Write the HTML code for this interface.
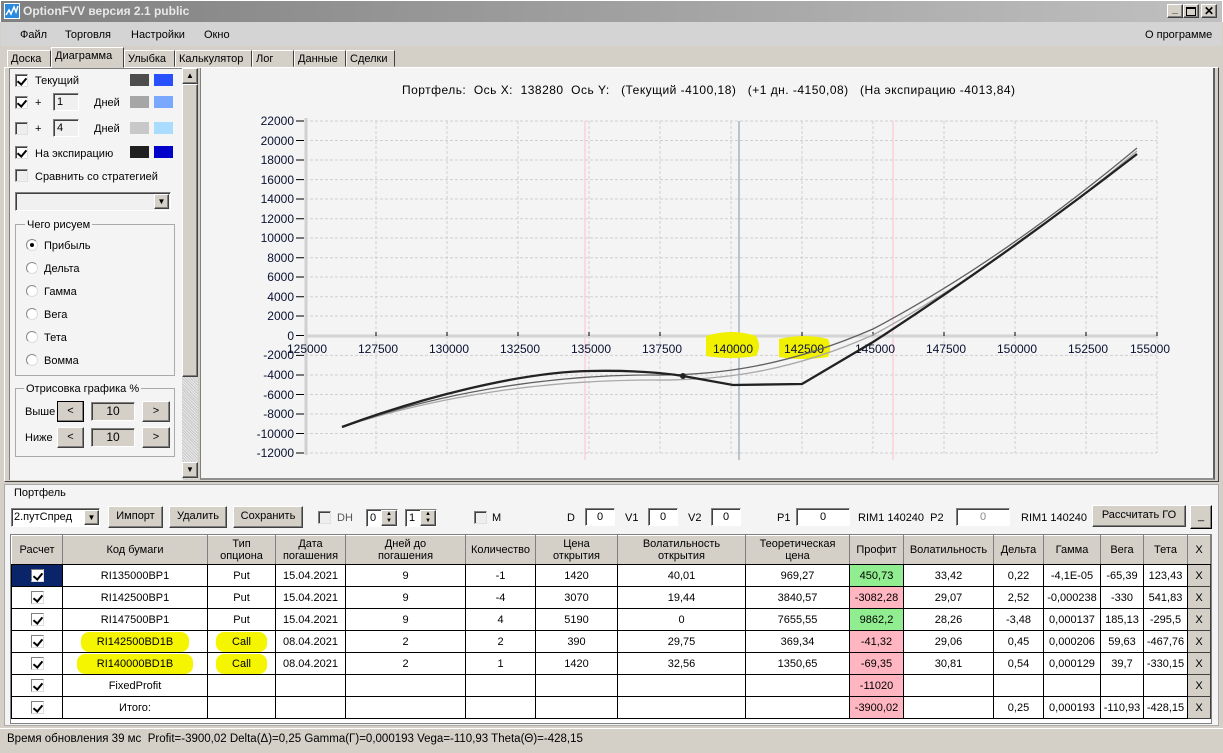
<!DOCTYPE html>
<html><head><meta charset="utf-8"><style>
*{box-sizing:border-box;margin:0;padding:0}
body{width:1223px;height:753px;overflow:hidden;background:#d4d0c8;font-family:"Liberation Sans",sans-serif;font-size:11px;color:#000;position:relative}
.a{position:absolute}
.cb{position:absolute;width:13px;height:13px;background:#fff;border:1px solid #808080;border-right-color:#e0e0e0;border-bottom-color:#e0e0e0;box-shadow:inset 1px 1px 0 #404040}
.cb.k::after{content:"";position:absolute;left:3px;top:1px;width:4px;height:7px;border:solid #000;border-width:0 2px 2px 0;transform:rotate(40deg)}
.cb.d{background:#eee}
.sw{position:absolute;width:19px;height:12px}
.rad{position:absolute;width:12px;height:12px;border-radius:50%;background:#fff;border:1px solid #888;border-right-color:#ddd;border-bottom-color:#ddd}
.rad.on::after{content:"";position:absolute;left:3px;top:3px;width:4px;height:4px;border-radius:50%;background:#000}
.btn{position:absolute;background:#d4d0c8;border:1px solid;border-color:#fff #404040 #404040 #fff;box-shadow:inset -1px -1px 0 #808080;text-align:center;font-size:11px}
.box{position:absolute;background:#fff;border:1px solid;border-color:#808080 #fff #fff #808080;box-shadow:inset 1px 1px 0 #404040;text-align:center;font-size:11px}
.tab{position:absolute;top:50px;height:17px;border:1px solid;border-color:#fff #404040 transparent #fff;padding:2px 3px;font-size:11px;background:#d4d0c8}
table{border-collapse:collapse;table-layout:fixed;font-size:11px}
td{border:1px solid #000;text-align:center;height:22px;padding:0;white-space:nowrap;overflow:hidden}
th{border:1px solid #000;font-weight:normal;background:#d4d0c8;height:29px;line-height:12px;font-size:11px;border-left-color:#fff;border-top-color:#fff;border-right-color:#808080;border-bottom:1px solid #000}
.g{background:#90ee90}.p{background:#ffb6c1}
.x{background:#d4d0c8;border-color:#fff #404040 #404040 #fff}
.hl{background:#f5f500;border-radius:8px;padding:4px 10px}
.ckc{display:inline-block;width:13px;height:13px;vertical-align:middle;position:relative;background:#fff;border:1px solid #808080;border-right-color:#ddd;border-bottom-color:#ddd}
.ckc::after{content:"";position:absolute;left:3px;top:1px;width:4px;height:7px;border:solid #000;border-width:0 2px 2px 0;transform:rotate(40deg)}
</style></head><body>
<div class="a" style="left:0;top:0;width:1223px;height:22px;background:linear-gradient(90deg,#808080,#c0c0c0);border:1px solid #fff;border-bottom:none"></div>
<div class="a" style="left:4px;top:3px;width:16px;height:16px;background:#2a8ae0;border:1px solid #fff"><svg width="14" height="14"><path d="M1 11 L4 6 L6 10 L9 3 L11 8 L13 2" stroke="#fff" stroke-width="1.5" fill="none"/></svg></div>
<div class="a" style="left:23px;top:4px;color:#e8e8e8;font-weight:bold;font-size:12px">OptionFVV версия 2.1 public</div>
<div class="btn" style="left:1167px;top:4px;width:16px;height:14px;font-size:10px;line-height:10px;font-weight:bold">_</div>
<div class="btn" style="left:1183px;top:4px;width:16px;height:14px"><div style="margin:2px auto;width:10px;height:9px;border:1px solid #000;border-top-width:2px"></div></div>
<div class="btn" style="left:1201px;top:4px;width:16px;height:14px;font-size:12px;line-height:12px;font-weight:bold">✕</div>
<div class="a" style="left:1px;top:22px;width:1221px;height:24px;background:#d4d4d4"></div>
<div class="a" style="left:20px;top:29px">Файл</div>
<div class="a" style="left:65px;top:29px">Торговля</div>
<div class="a" style="left:131px;top:29px">Настройки</div>
<div class="a" style="left:204px;top:29px">Окно</div>
<div class="a" style="left:1145px;top:29px">О программе</div>
<div class="tab" style="left:7px;width:44px">Доска</div>
<div class="tab" style="left:51px;top:47px;height:21px;width:73px;z-index:2">Диаграмма</div>
<div class="tab" style="left:124px;width:51px">Улыбка</div>
<div class="tab" style="left:175px;width:77px">Калькулятор</div>
<div class="tab" style="left:252px;width:42px">Лог</div>
<div class="tab" style="left:294px;width:52px">Данные</div>
<div class="tab" style="left:346px;width:49px">Сделки</div>
<div class="a" style="left:4px;top:67px;width:1215px;height:415px;border:1px solid;border-color:#fff #404040 #404040 #fff"></div>
<div class="a" style="left:9px;top:68px;width:174px;height:412px;background:#f4f4f4;border-left:1px solid #808080;border-top:1px solid #808080"></div>
<div class="cb k" style="left:15px;top:74px"></div><div class="a" style="left:35px;top:75px">Текущий</div>
<div class="sw" style="left:130px;top:74px;background:#4d4d4d"></div><div class="sw" style="left:154px;top:74px;background:#2850ff"></div>
<div class="cb k" style="left:15px;top:96px"></div><div class="a" style="left:35px;top:97px">+</div>
<div class="box" style="left:53px;top:93px;width:26px;height:18px;text-align:left;padding-left:3px;line-height:16px;background:#f0f0f0">1</div>
<div class="a" style="left:94px;top:97px">Дней</div>
<div class="sw" style="left:130px;top:96px;background:#a6a6a6"></div><div class="sw" style="left:154px;top:96px;background:#7aa8ff"></div>
<div class="cb d" style="left:15px;top:122px"></div><div class="a" style="left:35px;top:123px">+</div>
<div class="box" style="left:53px;top:119px;width:26px;height:18px;text-align:left;padding-left:3px;line-height:16px;background:#f0f0f0">4</div>
<div class="a" style="left:94px;top:123px">Дней</div>
<div class="sw" style="left:130px;top:122px;background:#c8c8c8"></div><div class="sw" style="left:154px;top:122px;background:#aadcff"></div>
<div class="cb k" style="left:15px;top:146px"></div><div class="a" style="left:35px;top:148px">На экспирацию</div>
<div class="sw" style="left:130px;top:146px;background:#202020"></div><div class="sw" style="left:154px;top:146px;background:#0000c8"></div>
<div class="cb d" style="left:15px;top:169px"></div><div class="a" style="left:35px;top:171px">Сравнить со стратегией</div>
<div class="box" style="left:15px;top:192px;width:156px;height:19px;background:#f0f0f0"></div>
<div class="btn" style="left:154px;top:194px;width:15px;height:15px;font-size:8px;line-height:13px">▼</div>
<div class="a" style="left:15px;top:224px;width:160px;height:152px;border:1px solid #aaa"></div>
<div class="a" style="left:25px;top:219px;background:#f4f4f4;padding:0 2px">Чего рисуем</div>
<div class="rad on" style="left:26px;top:239px"></div><div class="a" style="left:44px;top:240px">Прибыль</div>
<div class="rad" style="left:26px;top:262px"></div><div class="a" style="left:44px;top:263px">Дельта</div>
<div class="rad" style="left:26px;top:285px"></div><div class="a" style="left:44px;top:286px">Гамма</div>
<div class="rad" style="left:26px;top:308px"></div><div class="a" style="left:44px;top:309px">Вега</div>
<div class="rad" style="left:26px;top:331px"></div><div class="a" style="left:44px;top:332px">Тета</div>
<div class="rad" style="left:26px;top:354px"></div><div class="a" style="left:44px;top:355px">Вомма</div>
<div class="a" style="left:15px;top:388px;width:160px;height:69px;border:1px solid #aaa"></div>
<div class="a" style="left:24px;top:383px;background:#f4f4f4;padding:0 2px">Отрисовка графика %</div>
<div class="a" style="left:25px;top:406px">Выше</div>
<div class="btn" style="left:57px;top:401px;width:27px;height:21px;line-height:18px;border-color:#000">&lt;</div>
<div class="box" style="left:91px;top:402px;width:44px;height:19px;line-height:17px;background:#d4d0c8;font-size:12px">10</div>
<div class="btn" style="left:142px;top:401px;width:28px;height:21px;line-height:18px">&gt;</div>
<div class="a" style="left:25px;top:432px">Ниже</div>
<div class="btn" style="left:57px;top:427px;width:27px;height:21px;line-height:18px">&lt;</div>
<div class="box" style="left:91px;top:428px;width:44px;height:19px;line-height:17px;background:#d4d0c8;font-size:12px">10</div>
<div class="btn" style="left:142px;top:427px;width:28px;height:21px;line-height:18px">&gt;</div>
<div class="a" style="left:182px;top:68px;width:16px;height:411px;background:repeating-linear-gradient(45deg,#e8e8e8 0 1px,#c8c8c8 1px 2px)"></div>
<div class="btn" style="left:182px;top:68px;width:16px;height:16px;font-size:8px;line-height:13px">▲</div>
<div class="btn" style="left:182px;top:84px;width:16px;height:293px"></div>
<div class="btn" style="left:182px;top:462px;width:16px;height:16px;font-size:8px;line-height:13px">▼</div>
<div class="a" style="left:200px;top:68px;width:1015px;height:412px;background:#f4f4f4;border-right:2px solid #606060;border-bottom:2px solid #909090;border-left:1px solid #808080"></div>
<svg class="a" style="left:0;top:0" width="1223" height="480">
<text x="402" y="94" font-family="Liberation Sans,sans-serif" font-size="12" fill="#000" textLength="613" style="white-space:pre">Портфель:  Ось X:  138280  Ось Y:   (Текущий -4100,18)   (+1 дн. -4150,08)   (На экспирацию -4013,84)</text>
<g stroke="#d0d0d0" stroke-dasharray="3,2" stroke-width="1">
<path d="M376 121V453M447 121V453M518 121V453M589 121V453M660 121V453M731 121V453M802 121V453M873 121V453M944 121V453M1015 121V453M1086 121V453M1157 121V453"/>
<path d="M305 121H1157M305 140.5H1157M305 160H1157M305 179.6H1157M305 199H1157M305 218.7H1157M305 238H1157M305 257.7H1157M305 277H1157M305 296.8H1157M305 316H1157M305 355.4H1157M305 375H1157M305 394.5H1157M305 414H1157M305 433.5H1157M305 453H1157"/>
</g>
<path d="M585 121V460M893 121V460" stroke="#ffc0c8" stroke-width="1"/>
<path d="M739 121V460" stroke="#8090a0" stroke-width="1"/>
<path d="M305 336H1157" stroke="#d4d4d4" stroke-width="3"/>
<path d="M306 118V455" stroke="#d0d0d0" stroke-width="3"/>
<g stroke="#000"><path d="M296 121h8M296 140.5h8M296 160h8M296 179.6h8M296 199h8M296 218.7h8M296 238h8M296 257.7h8M296 277h8M296 296.8h8M296 316h8M296 335.5h8M296 355.4h8M296 375h8M296 394.5h8M296 414h8M296 433.5h8M296 453h8"/>
<path d="M376 332v4M447 332v4M518 332v4M589 332v4M660 332v4M731 332v4M802 332v4M873 332v4M944 332v4M1015 332v4M1086 332v4M1157 332v4"/></g>
<g font-family="Liberation Sans,sans-serif" font-size="12" text-anchor="end" fill="#0a1030">
<text x="294" y="125">22000</text><text x="294" y="145">20000</text><text x="294" y="164">18000</text><text x="294" y="184">16000</text><text x="294" y="203">14000</text><text x="294" y="223">12000</text><text x="294" y="242">10000</text><text x="294" y="262">8000</text><text x="294" y="281">6000</text><text x="294" y="301">4000</text><text x="294" y="320">2000</text><text x="294" y="340">0</text><text x="294" y="359">-2000</text><text x="294" y="379">-4000</text><text x="294" y="399">-6000</text><text x="294" y="418">-8000</text><text x="294" y="438">-10000</text><text x="294" y="457">-12000</text>
</g>
<path d="M706 336 q26 -8 50 0 q6 10 0 20 q-25 4 -50 0 z" fill="#f0f000"/>
<path d="M779 339 q26 -6 49 0 q4 9 0 18 q-25 4 -49 0 z" fill="#f0f000"/>
<g font-family="Liberation Sans,sans-serif" font-size="12" text-anchor="middle" fill="#0a1030">
<text x="307" y="353">125000</text><text x="378" y="353">127500</text><text x="449" y="353">130000</text><text x="520" y="353">132500</text><text x="591" y="353">135000</text><text x="662" y="353">137500</text><text x="733" y="353">140000</text><text x="804" y="353">142500</text><text x="875" y="353">145000</text><text x="946" y="353">147500</text><text x="1017" y="353">150000</text><text x="1088" y="353">152500</text><text x="1150" y="353">155000</text>
</g>
<path d="M342 427 C450 392 560 380 650 380 C720 381 790 372 873 335 Q1000 266 1137 151" stroke="#a8a8a8" stroke-width="1.3" fill="none"/>
<path d="M342 427 C450 389 560 375 650 375 C720 376 790 365 873 329 Q1000 262 1137 148" stroke="#606060" stroke-width="1.3" fill="none"/>
<path d="M342 427 C420 398 520 372 590 371 C630 370 665 373 683 376 L733 385 L802 384 L873 342 Q1000 260 1137 154" stroke="#222" stroke-width="2.3" fill="none"/>
<circle cx="683" cy="376" r="3" fill="#222"/>
</svg>
<div class="a" style="left:4px;top:484px;width:1215px;height:242px;background:#f4f4f4;border:1px solid #aaa"></div>
<div class="a" style="left:14px;top:487px">Портфель</div>
<div class="box" style="left:11px;top:508px;width:89px;height:19px;text-align:left;padding-left:2px;line-height:17px;background:#fff">2.путСпред</div>
<div class="btn" style="left:84px;top:510px;width:15px;height:15px;font-size:8px;line-height:13px">▼</div>
<div class="btn" style="left:108px;top:506px;width:55px;height:22px;line-height:19px">Импорт</div>
<div class="btn" style="left:169px;top:506px;width:58px;height:22px;line-height:19px">Удалить</div>
<div class="btn" style="left:233px;top:506px;width:70px;height:22px;line-height:19px">Сохранить</div>
<div class="cb d" style="left:318px;top:511px"></div><div class="a" style="left:337px;top:512px;color:#555">DH</div>
<div class="box" style="left:366px;top:509px;width:32px;height:18px;text-align:left;padding-left:3px;line-height:16px">0</div>
<div class="btn" style="left:381px;top:510px;width:16px;height:16px;font-size:6px;line-height:7px">▲<br>▼</div>
<div class="box" style="left:405px;top:509px;width:32px;height:18px;text-align:left;padding-left:3px;line-height:16px">1</div>
<div class="btn" style="left:420px;top:510px;width:16px;height:16px;font-size:6px;line-height:7px">▲<br>▼</div>
<div class="cb d" style="left:474px;top:511px"></div><div class="a" style="left:492px;top:512px">M</div>
<div class="a" style="left:567px;top:512px">D</div><div class="box" style="left:585px;top:508px;width:30px;height:18px;line-height:16px">0</div>
<div class="a" style="left:625px;top:512px">V1</div><div class="box" style="left:648px;top:508px;width:30px;height:18px;line-height:16px">0</div>
<div class="a" style="left:688px;top:512px">V2</div><div class="box" style="left:711px;top:508px;width:30px;height:18px;line-height:16px">0</div>
<div class="a" style="left:777px;top:512px">P1</div><div class="box" style="left:796px;top:508px;width:54px;height:18px;line-height:16px">0</div>
<div class="a" style="left:858px;top:512px">RIM1 140240&nbsp; P2</div><div class="box" style="left:956px;top:508px;width:54px;height:18px;line-height:16px;color:#888">0</div>
<div class="a" style="left:1021px;top:512px">RIM1 140240</div>
<div class="btn" style="left:1092px;top:505px;width:94px;height:22px;line-height:19px">Рассчитать ГО</div>
<div class="btn" style="left:1190px;top:505px;width:22px;height:24px;line-height:20px;border-color:#fff #000 #000 #fff">_</div>
<div class="a" style="left:10px;top:534px;width:1202px;height:190px;background:#fff;border:1px solid #808080"></div>
<table class="a" style="left:11px;top:535px;width:1199px">
<colgroup><col style="width:51px"><col style="width:145px"><col style="width:68px"><col style="width:70px"><col style="width:120px"><col style="width:70px"><col style="width:82px"><col style="width:128px"><col style="width:104px"><col style="width:54px"><col style="width:90px"><col style="width:50px"><col style="width:57px"><col style="width:43px"><col style="width:44px"><col style="width:23px"></colgroup>
<tr><th>Расчет</th><th>Код бумаги</th><th>Тип<br>опциона</th><th>Дата<br>погашения</th><th>Дней до<br>погашения</th><th>Количество</th><th>Цена<br>открытия</th><th>Волатильность<br>открытия</th><th>Теоретическая<br>цена</th><th>Профит</th><th>Волатильность</th><th>Дельта</th><th>Гамма</th><th>Вега</th><th>Тета</th><th>X</th></tr>
<tr><td style="background:#0a246a"><span class="ckc"></span></td><td>RI135000BP1</td><td>Put</td><td>15.04.2021</td><td>9</td><td>-1</td><td>1420</td><td>40,01</td><td>969,27</td><td class="g">450,73</td><td>33,42</td><td>0,22</td><td>-4,1E-05</td><td>-65,39</td><td>123,43</td><td class="x">X</td></tr>
<tr><td><span class="ckc"></span></td><td>RI142500BP1</td><td>Put</td><td>15.04.2021</td><td>9</td><td>-4</td><td>3070</td><td>19,44</td><td>3840,57</td><td class="p">-3082,28</td><td>29,07</td><td>2,52</td><td>-0,000238</td><td>-330</td><td>541,83</td><td class="x">X</td></tr>
<tr><td><span class="ckc"></span></td><td>RI147500BP1</td><td>Put</td><td>15.04.2021</td><td>9</td><td>4</td><td>5190</td><td>0</td><td>7655,55</td><td class="g">9862,2</td><td>28,26</td><td>-3,48</td><td>0,000137</td><td>185,13</td><td>-295,5</td><td class="x">X</td></tr>
<tr><td><span class="ckc"></span></td><td><span class="hl" style="padding:4px 16px">RI142500BD1B</span></td><td><span class="hl" style="padding:4px 16px">Call</span></td><td>08.04.2021</td><td>2</td><td>2</td><td>390</td><td>29,75</td><td>369,34</td><td class="p">-41,32</td><td>29,06</td><td>0,45</td><td>0,000206</td><td>59,63</td><td>-467,76</td><td class="x">X</td></tr>
<tr><td><span class="ckc"></span></td><td><span class="hl" style="padding:4px 20px">RI140000BD1B</span></td><td><span class="hl" style="padding:4px 16px">Call</span></td><td>08.04.2021</td><td>2</td><td>1</td><td>1420</td><td>32,56</td><td>1350,65</td><td class="p">-69,35</td><td>30,81</td><td>0,54</td><td>0,000129</td><td>39,7</td><td>-330,15</td><td class="x">X</td></tr>
<tr><td><span class="ckc"></span></td><td>FixedProfit</td><td></td><td></td><td></td><td></td><td></td><td></td><td></td><td class="p">-11020</td><td></td><td></td><td></td><td></td><td></td><td class="x">X</td></tr>
<tr><td><span class="ckc"></span></td><td>Итого:</td><td></td><td></td><td></td><td></td><td></td><td></td><td></td><td class="p">-3900,02</td><td></td><td>0,25</td><td>0,000193</td><td>-110,93</td><td>-428,15</td><td class="x">X</td></tr>
</table>
<div class="a" style="left:0;top:728px;width:1223px;height:25px;background:#d4d0c8;border-top:1px solid #fff"></div>
<div class="a" style="left:7px;top:733px;font-size:11.5px">Время обновления 39 мс&nbsp; Profit=-3900,02 Delta(Δ)=0,25 Gamma(Γ)=0,000193 Vega=-110,93 Theta(Θ)=-428,15</div>
</body></html>
